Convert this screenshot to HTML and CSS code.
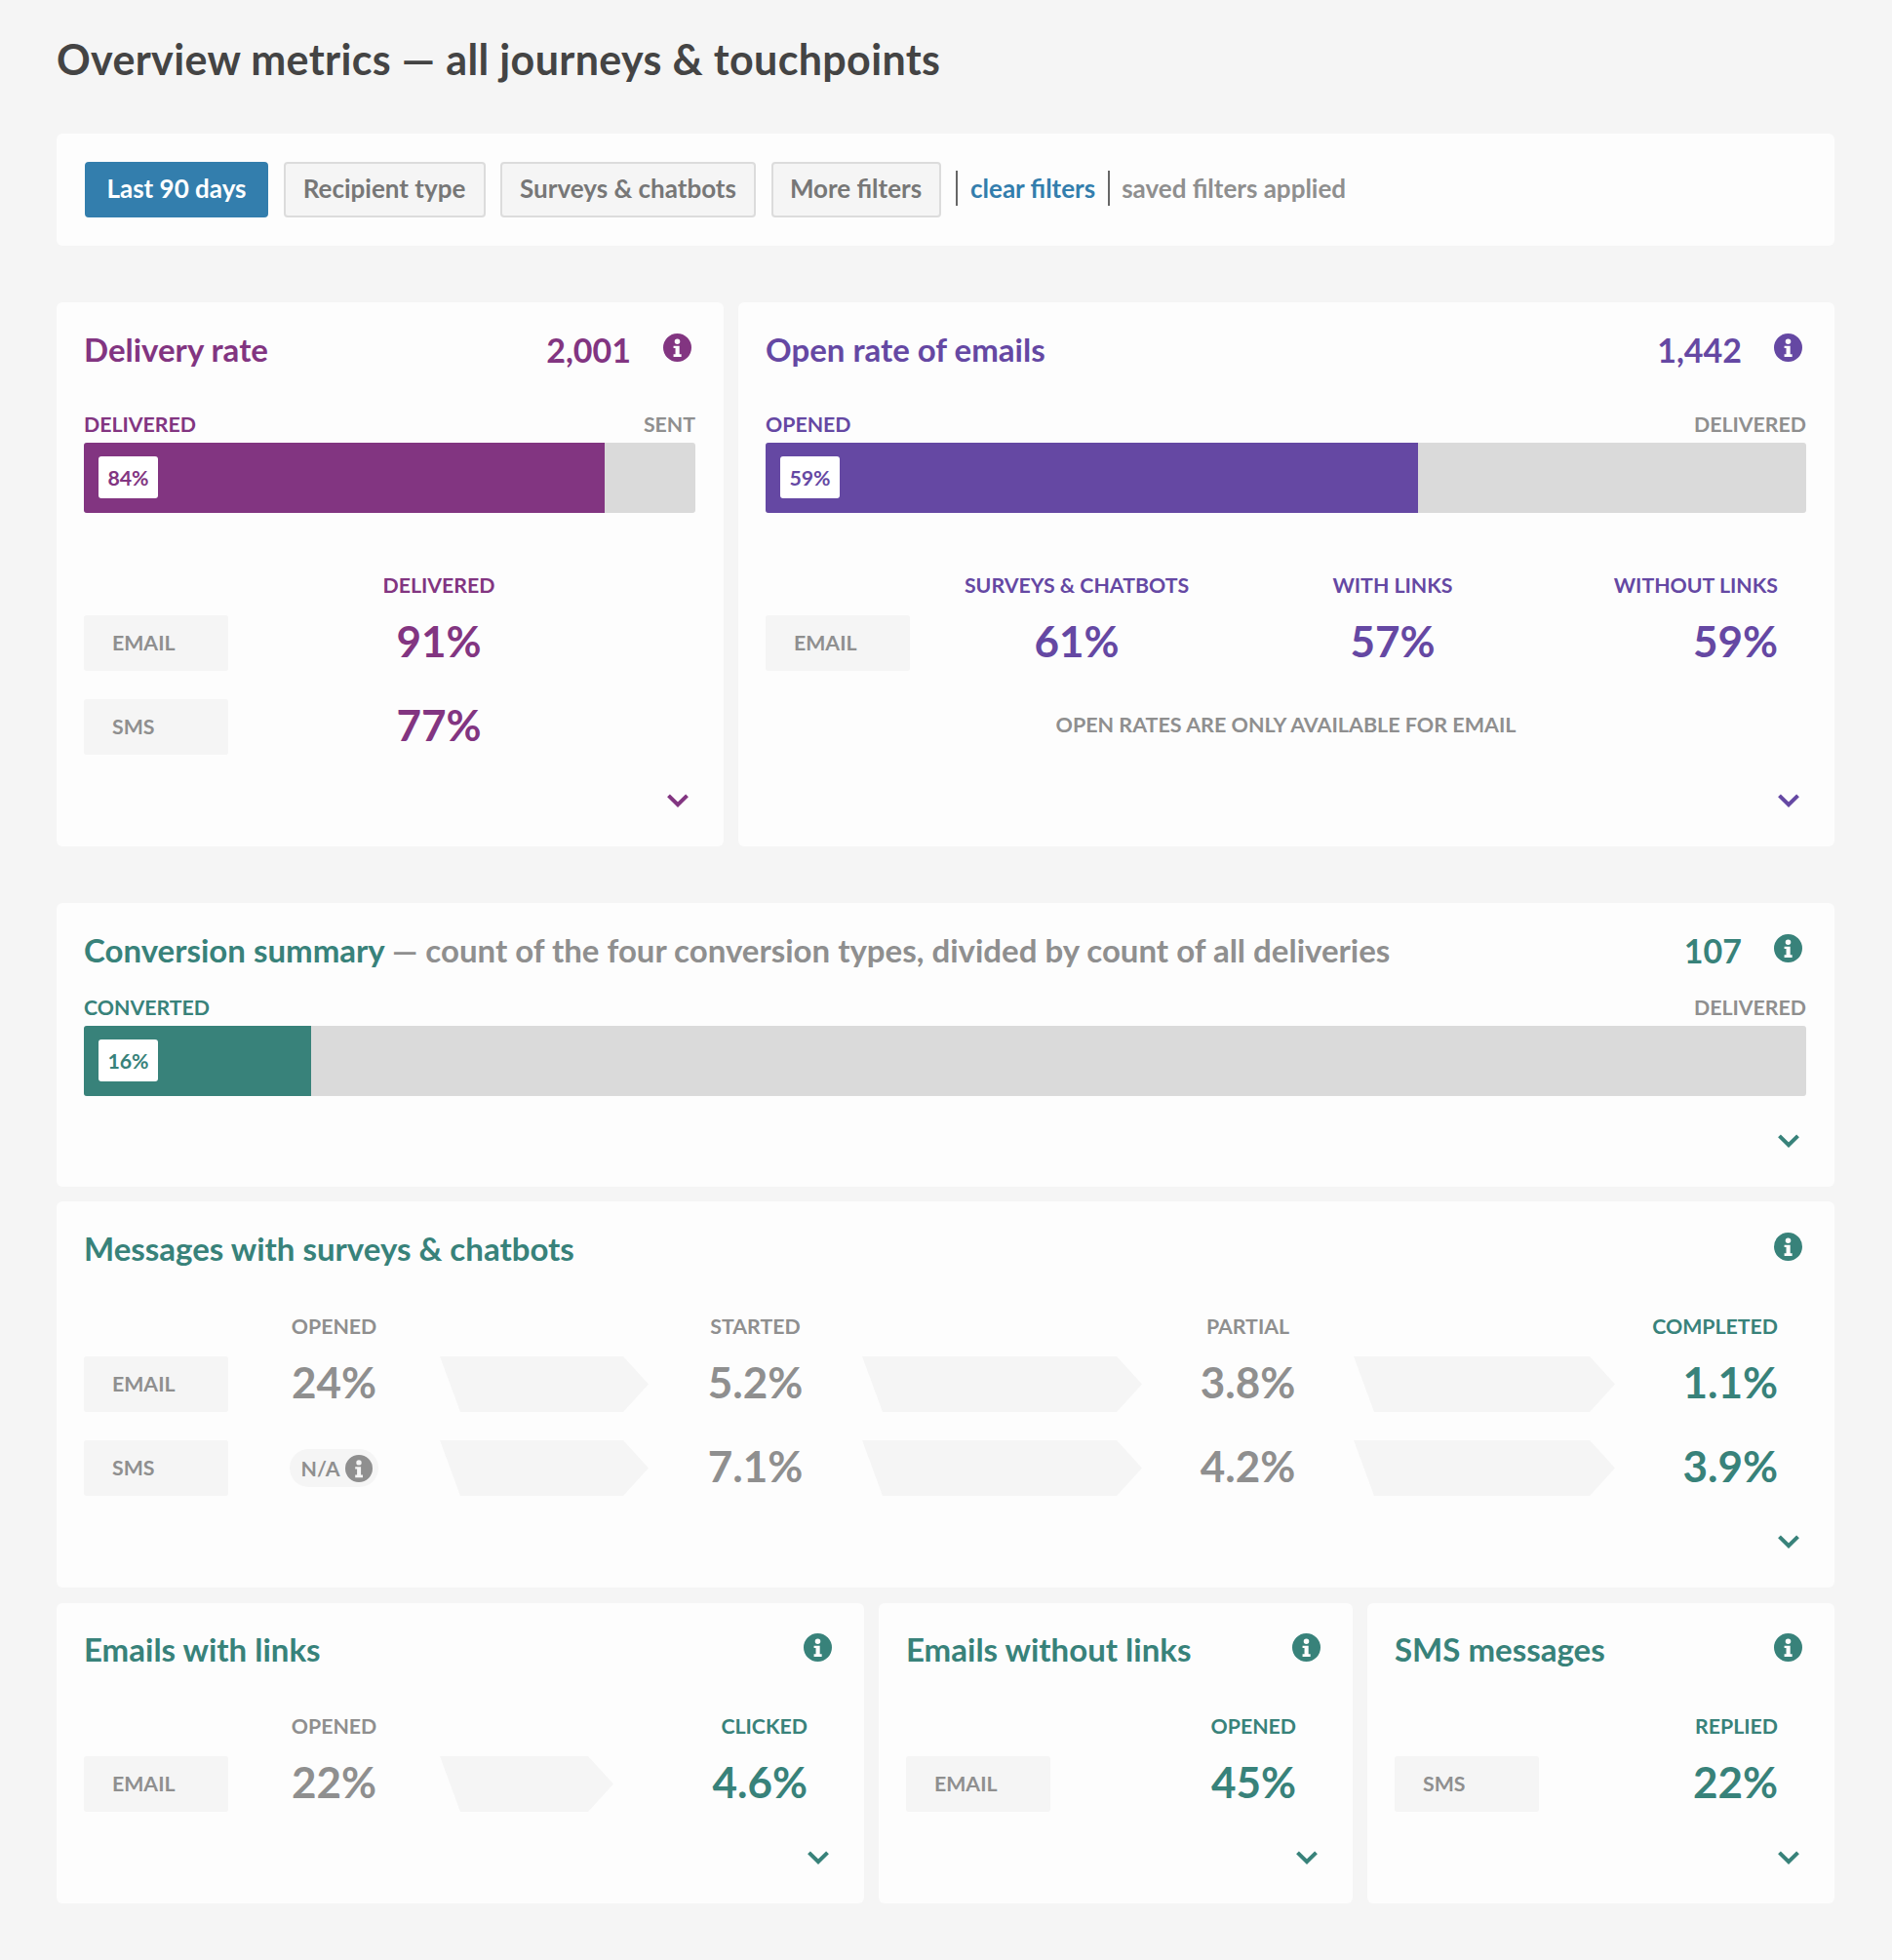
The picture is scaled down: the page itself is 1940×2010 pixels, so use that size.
FILE: index.html
```html
<!DOCTYPE html>
<html lang="en">
<head>
<meta charset="utf-8">
<title>Overview metrics</title>
<link rel="stylesheet" href="styles.css">
</head>
<body>
<svg class="defs" width="0" height="0" aria-hidden="true">
  <symbol id="info" viewBox="0 0 28 28"><path fill="currentColor" fill-rule="evenodd" d="M14 0a14 14 0 1 1 0 28a14 14 0 0 1 0-28zM14 5.2a2.7 2.7 0 1 0 0 5.4a2.7 2.7 0 0 0 0-5.4zM10.2 12.2v2.4h1.9v6h-1.9v2.6h7.8v-2.6h-1.9v-8.4z"/></symbol>
  <symbol id="chev" viewBox="0 0 22 14"><path fill="none" stroke="currentColor" stroke-width="4" d="M1.5 1.8L11 11.2L20.5 1.8"/></symbol>
</svg>
<main class="page">
  <h1 class="title">Overview metrics — all journeys &amp; touchpoints</h1>

  <section class="card filters">
    <button class="btn btn-on">Last 90 days</button>
    <button class="btn">Recipient type</button>
    <button class="btn">Surveys &amp; chatbots</button>
    <button class="btn">More filters</button>
    <span class="clear">clear filters</span>
    <span class="saved">saved filters applied</span>
  </section>

  <div class="split split-top">
    <section class="card purple">
      <header class="head"><h2>Delivery rate</h2><span class="count">2,001</span><svg class="info"><use href="#info"/></svg></header>
      <div class="barlabels"><span class="c">DELIVERED</span><span>SENT</span></div>
      <div class="bar"><div class="fill" style="width:85.1%"><span class="badge">84%</span></div></div>
      <div class="table t-delivery">
        <div class="mrow mhead"><span></span><span class="lab c mid">DELIVERED</span></div>
        <div class="mrow"><span class="chan">EMAIL</span><span class="val c mid">91%</span></div>
        <div class="mrow"><span class="chan">SMS</span><span class="val c mid">77%</span></div>
      </div>
      <footer class="foot"><svg class="chev"><use href="#chev"/></svg></footer>
    </section>
    <section class="card violet">
      <header class="head"><h2>Open rate of emails</h2><span class="count">1,442</span><svg class="info"><use href="#info"/></svg></header>
      <div class="barlabels"><span class="c">OPENED</span><span>DELIVERED</span></div>
      <div class="bar"><div class="fill" style="width:62.7%"><span class="badge">59%</span></div></div>
      <div class="table t-open">
        <div class="mrow mhead"><span></span><span class="lab c mid">SURVEYS &amp; CHATBOTS</span><span class="lab c mid">WITH LINKS</span><span class="lab c end">WITHOUT LINKS</span></div>
        <div class="mrow"><span class="chan">EMAIL</span><span class="val c mid">61%</span><span class="val c mid">57%</span><span class="val c end">59%</span></div>
        <div class="note">OPEN RATES ARE ONLY AVAILABLE FOR EMAIL</div>
      </div>
      <footer class="foot"><svg class="chev"><use href="#chev"/></svg></footer>
    </section>
  </div>

  <section class="card teal conv">
    <header class="head"><h2>Conversion summary <span class="sub">— count of the four conversion types, divided by count of all deliveries</span></h2><span class="count">107</span><svg class="info"><use href="#info"/></svg></header>
    <div class="barlabels"><span class="c">CONVERTED</span><span>DELIVERED</span></div>
    <div class="bar"><div class="fill" style="width:13.2%"><span class="badge">16%</span></div></div>
    <footer class="foot"><svg class="chev"><use href="#chev"/></svg></footer>
  </section>

  <section class="card teal msgs">
    <header class="head"><h2>Messages with surveys &amp; chatbots</h2><svg class="info"><use href="#info"/></svg></header>
    <div class="table t-msgs">
      <div class="mrow mhead"><span></span><span class="lab mid">OPENED</span><span></span><span class="lab mid">STARTED</span><span></span><span class="lab mid">PARTIAL</span><span></span><span class="lab c end">COMPLETED</span></div>
      <div class="mrow"><span class="chan">EMAIL</span><span class="val mid">24%</span><span class="arrow"></span><span class="val mid">5.2%</span><span class="arrow"></span><span class="val mid">3.8%</span><span class="arrow"></span><span class="val c end">1.1%</span></div>
      <div class="mrow"><span class="chan">SMS</span><span class="mid"><span class="na">N/A<svg class="info-na"><use href="#info"/></svg></span></span><span class="arrow"></span><span class="val mid">7.1%</span><span class="arrow"></span><span class="val mid">4.2%</span><span class="arrow"></span><span class="val c end">3.9%</span></div>
    </div>
    <footer class="foot"><svg class="chev"><use href="#chev"/></svg></footer>
  </section>

  <div class="split split-bottom">
    <section class="card teal small">
      <header class="head"><h2>Emails with links</h2><svg class="info"><use href="#info"/></svg></header>
      <div class="table t-links">
        <div class="mrow mhead"><span></span><span class="lab mid">OPENED</span><span></span><span class="lab c end">CLICKED</span></div>
        <div class="mrow"><span class="chan">EMAIL</span><span class="val mid">22%</span><span class="arrow"></span><span class="val c end">4.6%</span></div>
      </div>
      <footer class="foot"><svg class="chev"><use href="#chev"/></svg></footer>
    </section>
    <section class="card teal small">
      <header class="head"><h2>Emails without links</h2><svg class="info"><use href="#info"/></svg></header>
      <div class="table t-single">
        <div class="mrow mhead"><span></span><span class="lab c end">OPENED</span></div>
        <div class="mrow"><span class="chan">EMAIL</span><span class="val c end">45%</span></div>
      </div>
      <footer class="foot"><svg class="chev"><use href="#chev"/></svg></footer>
    </section>
    <section class="card teal small">
      <header class="head"><h2>SMS messages</h2><svg class="info"><use href="#info"/></svg></header>
      <div class="table t-single">
        <div class="mrow mhead"><span></span><span class="lab c end">REPLIED</span></div>
        <div class="mrow"><span class="chan">SMS</span><span class="val c end">22%</span></div>
      </div>
      <footer class="foot"><svg class="chev"><use href="#chev"/></svg></footer>
    </section>
  </div>
</main>
</body>
</html>
```

FILE: styles.css
```css
* { box-sizing: border-box; }
html, body { margin: 0; background: #f5f5f5; }
body { font-family: "Lato", "Liberation Sans", sans-serif; color: #8f8f8f; }
.defs { position: absolute; }
.page { width: 1940px; height: 2010px; padding: 0 59px 0 58px; }
.title { margin: 0; height: 137px; padding-top: 34px; font-size: 43px; line-height: 54px; font-weight: 700; letter-spacing: 0.35px; color: #444; }
.card { background: #fdfdfd; border-radius: 6px; padding: 28px 29px 0 28px; }
.filters { height: 115px; padding: 29px 29px; display: flex; align-items: center; font-size: 26px; font-weight: 700; }
.btn { flex: none; height: 57px; margin-right: 15.5px; padding: 0 0 3px; border: 2px solid #dcdcdc; border-radius: 4px; background: #f5f5f5; color: #777; font: inherit; }
.btn:nth-child(1) { width: 188px; }
.btn:nth-child(2) { width: 207px; }
.btn:nth-child(3) { width: 262px; }
.btn:nth-child(4) { width: 174px; }
.btn-on { background: #337ead; border-color: #337ead; color: #fff; }
.clear { color: #337ead; border-left: 2px solid #666; line-height: 36px; padding: 0 13px 0 13px; margin-top: -3px; }
.saved { color: #8f8f8f; border-left: 2px solid #666; line-height: 36px; padding-left: 12px; margin-top: -3px; }
.split { display: grid; gap: 15px; }
.split-top { grid-template-columns: 684px 1fr; margin-top: 58px; height: 558px; }
.split-bottom { grid-template-columns: 828px 486px 1fr; margin-top: 16px; height: 308px; }
.purple { --c: #823581; }
.violet { --c: #6548a3; }
.teal { --c: #38827a; }
.c { color: var(--c); }
.head { display: flex; align-items: center; height: 40px; color: var(--c); }
.head h2 { margin: 0; flex: 1; font-size: 33px; line-height: 40px; font-weight: 700; }
.sub { color: #8f8f8f; }
.count { font-size: 34px; font-weight: 700; margin-right: 33px; }
.info { width: 29px; height: 29px; margin: -4px 4px 0 0; color: var(--c); }
.barlabels { display: flex; justify-content: space-between; margin-top: 45px; font-size: 21.3px; line-height: 24px; font-weight: 700; }
.bar { margin-top: 7px; height: 72px; background: #dadada; border-radius: 3px; overflow: hidden; }
.fill { height: 100%; background: var(--c); padding: 14px 15px; }
.badge { display: flex; align-items: center; justify-content: center; width: 61px; height: 43px; background: #fff; border-radius: 3px; color: var(--c); font-size: 21.3px; font-weight: 700; }
.table { margin-top: 62px; }
.mrow { display: grid; align-items: center; height: 57px; margin-bottom: 29px; }
.mrow:last-child { margin-bottom: 0; }
.mhead { height: 24px; margin-bottom: 19px; }
.lab { font-size: 21.3px; line-height: 24px; font-weight: 700; }
.val { font-size: 44px; line-height: 52px; padding-bottom: 5px; font-weight: 700; }
.mid { text-align: center; }
.end { text-align: right; padding-right: 29px; }
.chan { display: flex; align-items: center; height: 57px; padding: 0 0 2px 29px; background: #f5f5f5; border-radius: 3px; font-size: 21.3px; font-weight: 700; }
.note { text-align: center; line-height: 52px; height: 57px; font-size: 21.5px; font-weight: 700; }
.foot { display: flex; justify-content: flex-end; align-items: center; height: 22px; margin-top: 36px; padding-right: 7px; color: var(--c); }
.chev { width: 22px; height: 14px; }
.t-delivery .mrow { grid-template-columns: 148px 432px; }
.t-open .mrow { grid-template-columns: 148px 342px 306px 1fr; }
.t-msgs .mrow { grid-template-columns: 148px 217px 214px 219px 287px 217px 268px 1fr; }
.t-links .mrow { grid-template-columns: 148px 217px 178px 1fr; }
.t-single .mrow { grid-template-columns: 148px 1fr; }
.arrow { height: 57px; background: #f5f5f5; clip-path: polygon(0 0, calc(100% - 26px) 0, 100% 50%, calc(100% - 26px) 100%, 21px 100%); }
.na { display: inline-flex; align-items: center; gap: 6px; height: 39px; padding: 0 6px 0 12px; border-radius: 20px; background: #f5f5f5; font-size: 21.3px; font-weight: 700; }
.info-na { width: 28px; height: 28px; color: #8f8f8f; }
.conv { margin-top: 58px; height: 291px; }
.conv .barlabels { margin-top: 27px; }
.conv .foot { margin-top: 35px; }
.msgs { margin-top: 15px; height: 396px; padding-top: 28px; }
.msgs .table { margin-top: 48px; }
.msgs .foot { margin-top: 36px; }
.small { padding-top: 27px; }
.small .table { margin-top: 47px; }
```
